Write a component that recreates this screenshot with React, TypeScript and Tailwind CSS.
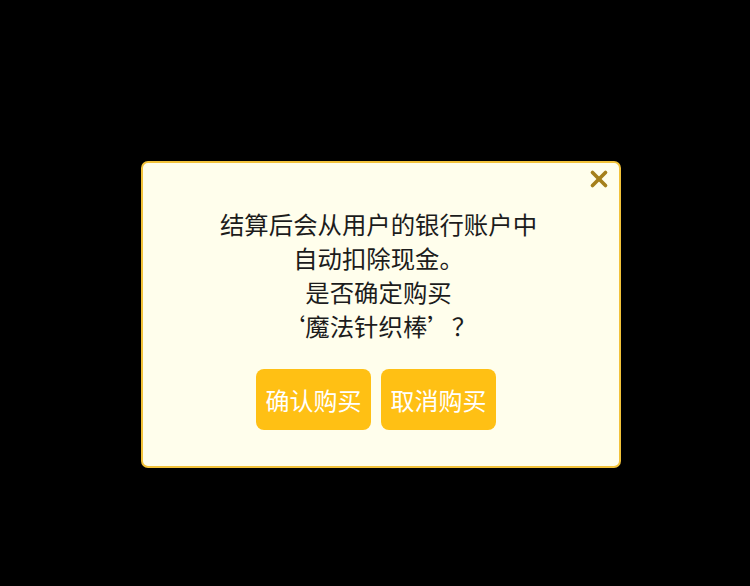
import { X } from "lucide-react";

function PurchaseDialog() {
  return (
    <div className="relative w-[480px] h-[307px] rounded-[7px] border-2 border-[#f2c23a] bg-[#fffeec] pt-[44px] flex flex-col items-center">
      <button className="absolute right-[7px] top-[3px] text-[#a5801c]">
        <X size={26} strokeWidth={3.4} />
      </button>
      <div className="text-[24.4px] leading-[34px] text-[#1c1c1c] text-center pr-[5px]">
        <p>结算后会从用户的银行账户中</p>
        <p>自动扣除现金。</p>
        <p>是否确定购买</p>
        <p>
          {/* full-width quote boxes */}
          <span className="inline-block w-[1em] text-right">‘</span>魔法针织棒<span className="inline-block w-[1em] text-left">’</span>？
        </p>
      </div>
      <div className="flex gap-[10px] mt-[26px] pr-[10px]">
        <button className="w-[115px] h-[61px] rounded-[8px] bg-[#ffc014] text-white text-[24px]">确认购买</button>
        <button className="w-[115px] h-[61px] rounded-[8px] bg-[#ffc014] text-white text-[24px]">取消购买</button>
      </div>
    </div>
  );
}

export default function App() {
  return (
    <div
      className="w-[750px] h-[586px] bg-black pl-[141px] pt-[161px]"
      style={{ fontFamily: '"Noto Sans CJK SC", "Noto Sans", sans-serif' }}
    >
      <PurchaseDialog />
    </div>
  );
}
